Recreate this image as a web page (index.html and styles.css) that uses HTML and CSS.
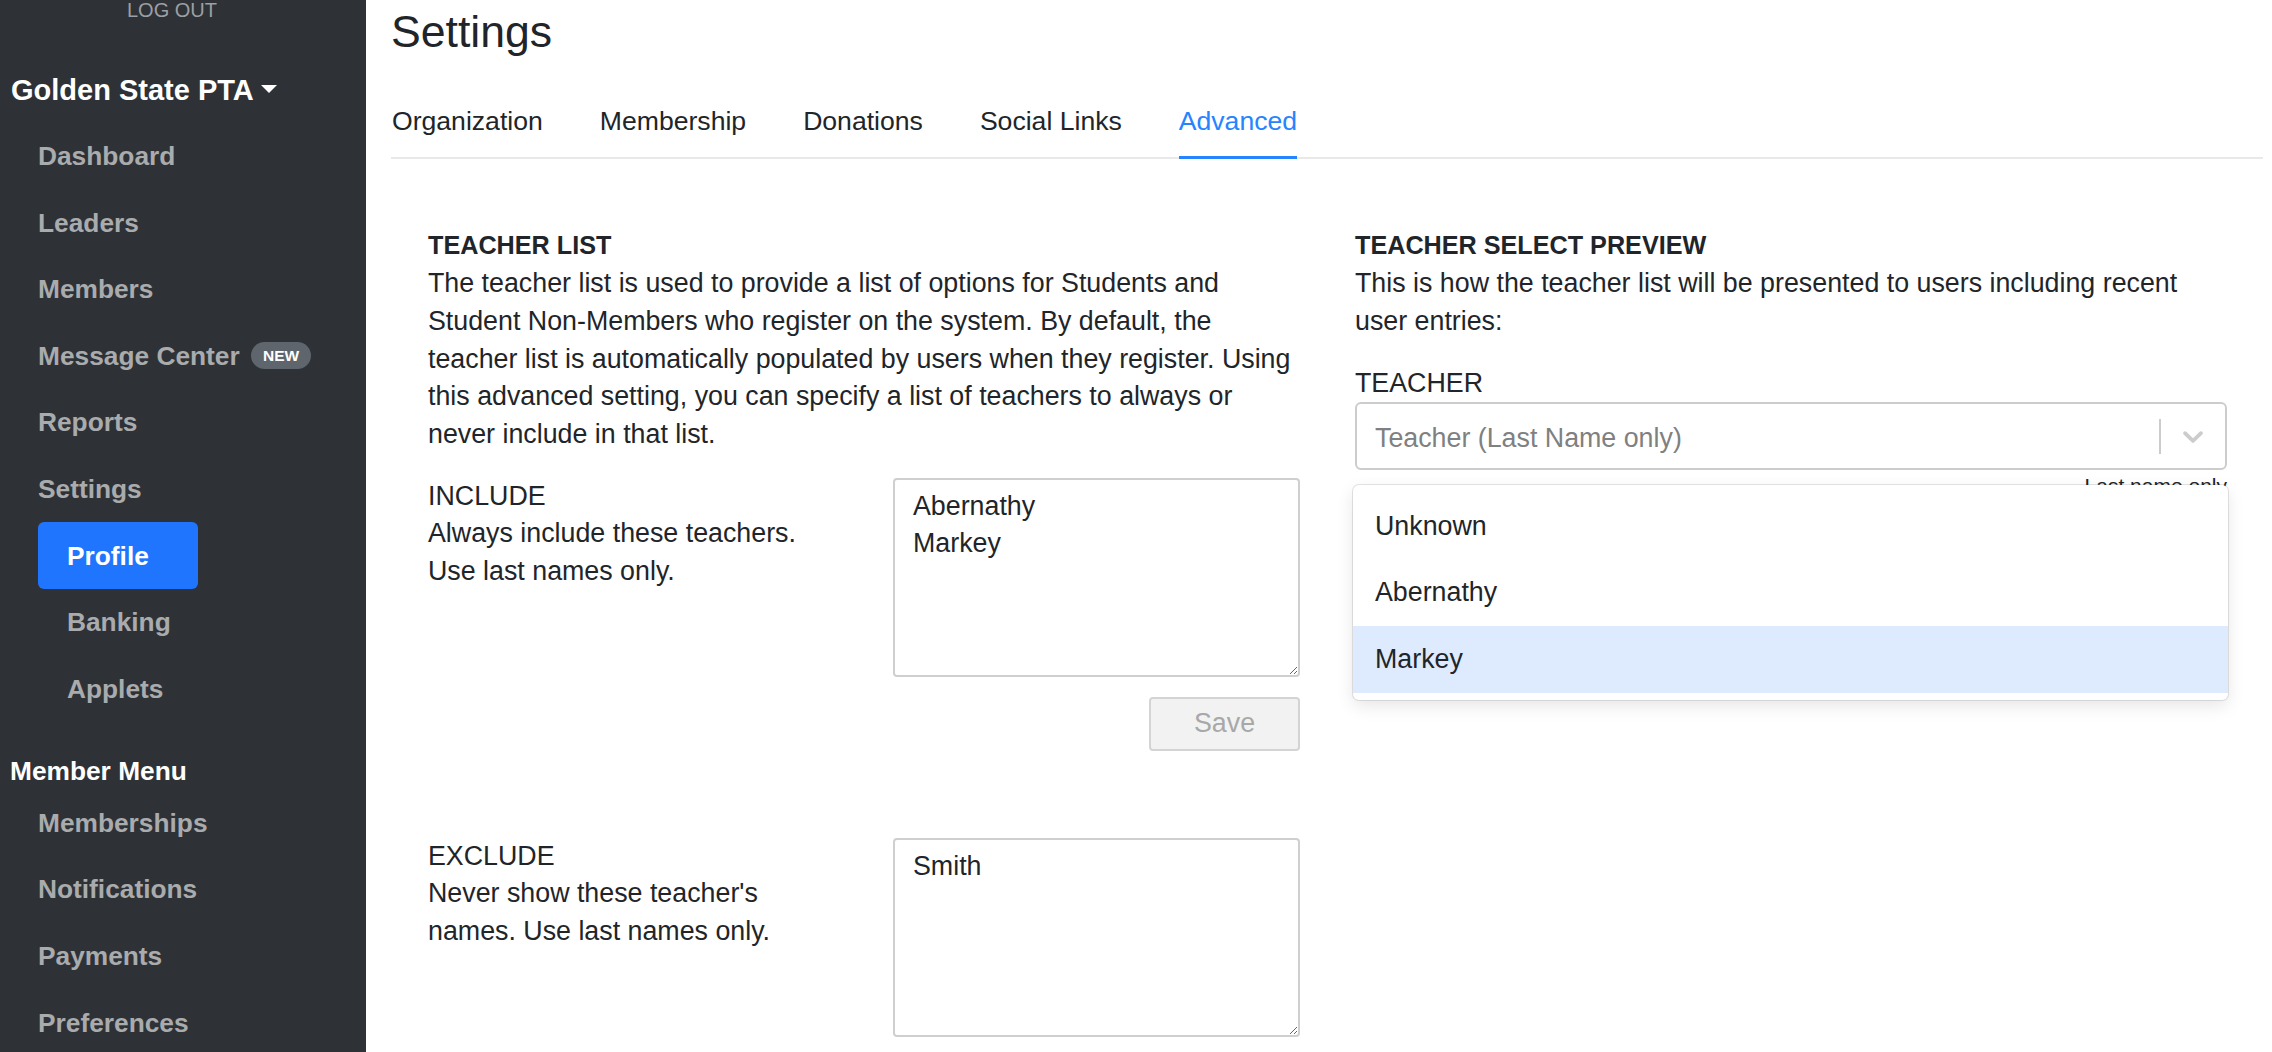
FILE: index.html
```html
<!DOCTYPE html>
<html lang="en">
<head>
<meta charset="utf-8">
<title>Settings</title>
<link rel="stylesheet" href="styles.css">
</head>
<body>
<aside class="sidebar">
  <div class="logout">LOG OUT</div>
  <div class="org">Golden State PTA <span class="caret"></span></div>
  <ul class="nav">
    <li><a class="nav-link">Dashboard</a></li>
    <li><a class="nav-link">Leaders</a></li>
    <li><a class="nav-link">Members</a></li>
    <li><a class="nav-link">Message Center <span class="badge">NEW</span></a></li>
    <li><a class="nav-link">Reports</a></li>
    <li><a class="nav-link">Settings</a>
      <ul class="subnav">
        <li><a class="sub-link active">Profile</a></li>
        <li><a class="sub-link">Banking</a></li>
        <li><a class="sub-link">Applets</a></li>
      </ul>
    </li>
  </ul>
  <div class="section-title">Member Menu</div>
  <ul class="nav nav-member">
    <li><a class="nav-link">Memberships</a></li>
    <li><a class="nav-link">Notifications</a></li>
    <li><a class="nav-link">Payments</a></li>
    <li><a class="nav-link">Preferences</a></li>
  </ul>
</aside>

<main class="main">
  <h1 class="title">Settings</h1>
  <nav class="tabs">
    <a class="tab">Organization</a>
    <a class="tab">Membership</a>
    <a class="tab">Donations</a>
    <a class="tab">Social Links</a>
    <a class="tab active">Advanced</a>
  </nav>

  <div class="content">
    <section class="col">
      <h3 class="heading">TEACHER LIST</h3>
      <p class="desc">The teacher list is used to provide a list of options for Students and<br>Student Non-Members who register on the system. By default, the<br>teacher list is automatically populated by users when they register. Using<br>this advanced setting, you can specify a list of teachers to always or<br>never include in that list.</p>

      <div class="field-row">
        <div class="field-label">INCLUDE<br>Always include these teachers.<br>Use last names only.</div>
        <div class="field-input">
          <textarea class="textarea">Abernathy
Markey</textarea>
          <div class="save-row"><button class="btn-save" disabled>Save</button></div>
        </div>
      </div>

      <div class="field-row field-row-exclude">
        <div class="field-label">EXCLUDE<br>Never show these teacher's<br>names. Use last names only.</div>
        <div class="field-input">
          <textarea class="textarea">Smith</textarea>
        </div>
      </div>
    </section>

    <section class="col">
      <h3 class="heading">TEACHER SELECT PREVIEW</h3>
      <p class="desc">This is how the teacher list will be presented to users including recent<br>user entries:</p>

      <div class="select-group">
        <div class="select-label">TEACHER</div>
        <div class="select-wrap">
          <div class="select">
            <div class="select-value">Teacher (Last Name only)</div>
            <span class="select-sep"></span>
            <div class="select-indicator">
              <svg viewBox="0 0 20 20" width="34" height="34" aria-hidden="true"><path fill="#cccccc" d="M4.516 7.548c0.436-0.446 1.043-0.481 1.576 0l3.908 3.747 3.908-3.747c0.533-0.481 1.141-0.446 1.574 0 0.436 0.445 0.408 1.197 0 1.615-0.406 0.418-4.695 4.502-4.695 4.502-0.217 0.223-0.502 0.335-0.787 0.335s-0.57-0.112-0.789-0.335c0 0-4.287-4.084-4.695-4.502s-0.436-1.170 0-1.615z"/></svg>
            </div>
          </div>
          <div class="menu">
            <div class="option">Unknown</div>
            <div class="option">Abernathy</div>
            <div class="option focused">Markey</div>
          </div>
        </div>
        <div class="helper">Last name only</div>
      </div>
    </section>
  </div>
</main>
</body>
</html>
```

FILE: styles.css
```css
* { box-sizing: border-box; }

html, body { height: 100%; }

body {
  margin: 0;
  display: flex;
  height: 1052px;
  overflow: hidden;
  font-family: "Liberation Sans", Arial, sans-serif;
  color: #212529;
  background: #ffffff;
}

/* Sidebar */
.sidebar {
  width: 366px;
  flex: none;
  background: #2e3237;
  color: #a9abad;
}

.logout {
  margin-left: 127px;
  font-size: 20px;
  line-height: 21px;
  color: #9c9fa3;
}

.org {
  margin-top: 51.5px;
  margin-left: 11px;
  font-size: 29px;
  line-height: 35px;
  font-weight: 700;
  color: #ffffff;
  display: flex;
  align-items: center;
}

.caret {
  display: inline-block;
  width: 0;
  height: 0;
  margin-left: 7px;
  margin-top: -3px;
  border-top: 8px solid #ffffff;
  border-left: 8.5px solid transparent;
  border-right: 8.5px solid transparent;
}

.nav, .subnav {
  list-style: none;
  margin: 0;
  padding: 0;
}

.nav {
  margin-top: 15.3px;
}

.nav-link, .sub-link {
  display: block;
  font-size: 26.3px;
  line-height: 30px;
  padding: 18.3px 0;
  font-weight: 700;
  color: #a9abad;
}

.nav-link {
  margin-left: 38px;
}

.subnav {
  margin-left: 38px;
}

.sub-link {
  padding-left: 29px;
  width: 160px;
  border-radius: 6px;
}

.sub-link.active {
  background: #1f75fe;
  color: #ffffff;
}

.badge {
  display: inline-block;
  margin-left: 4px;
  padding: 0 12px;
  height: 27px;
  line-height: 27px;
  border-radius: 14px;
  background: #5e656c;
  color: #ffffff;
  font-size: 15.5px;
  font-weight: 700;
  vertical-align: 4px;
}

.section-title {
  margin-top: 34px;
  margin-left: 10px;
  font-size: 26.3px;
  line-height: 30px;
  font-weight: 700;
  color: #ffffff;
}

.nav-member {
  margin-top: 3.4px;
}

/* Main */
.main {
  flex: 1;
  min-width: 0;
  padding: 6.4px 9px 0 25px;
}

.title {
  margin: 0;
  font-size: 44.6px;
  line-height: 52.8px;
  font-weight: 400;
  color: #212529;
}

.tabs {
  display: flex;
  margin-top: 43.3px;
  border-bottom: 2px solid #e9e9e9;
}

.tab {
  font-size: 26.6px;
  line-height: 38.5px;
  padding-bottom: 15px;
  margin-right: 57px;
  margin-bottom: -2px;
  border-bottom: 3px solid transparent;
  color: #212529;
}

.tab:first-child {
  margin-left: 1px;
}

.tab.active {
  color: #2684ff;
  border-bottom-color: #2684ff;
}

.content {
  display: grid;
  grid-template-columns: 1fr 1fr;
  column-gap: 55px;
  padding: 68.5px 36px 0 37px;
  font-size: 26.8px;
  line-height: 37.7px;
}

.heading {
  margin: 0;
  font-size: 25.2px;
  line-height: 37.7px;
  font-weight: 700;
}

.desc {
  margin: 0;
  white-space: nowrap;
}

.field-row {
  display: grid;
  grid-template-columns: 1fr 407px;
  column-gap: 60px;
  margin-top: 24px;
}

.field-row-exclude {
  margin-top: 87px;
}

.field-label {
  white-space: nowrap;
}

.textarea {
  display: block;
  width: 407px;
  height: 199px;
  padding: 8px 18px;
  border: 2px solid #cfcfcf;
  border-radius: 4px;
  font-family: inherit;
  font-size: 26.8px;
  line-height: 37.7px;
  color: #212529;
  resize: vertical;
  outline: none;
}

.save-row {
  display: flex;
  justify-content: flex-end;
  margin-top: 20px;
}

.btn-save {
  width: 151px;
  height: 54px;
  font-family: inherit;
  font-size: 26.8px;
  color: #a8a8a8;
  background: #f2f2f2;
  border: 2px solid #d4d4d4;
  border-radius: 4px;
}

.select-group {
  margin-top: 24px;
}

.select-label {
  line-height: 37.7px;
}

.select-wrap {
  position: relative;
  margin-top: 0;
}

.select {
  display: flex;
  align-items: center;
  height: 68px;
  border: 2px solid #cccccc;
  border-radius: 6px;
  background: #ffffff;
}

.select-value {
  flex: 1;
  padding-left: 18px;
  padding-top: 5px;
  color: #808080;
}

.select-sep {
  width: 2px;
  height: 35px;
  background: #cccccc;
}

.select-indicator {
  width: 64px;
  display: flex;
  align-items: center;
  justify-content: center;
}

.select-indicator svg {
  display: block;
}

.helper {
  text-align: right;
  font-size: 21px;
  line-height: 31.5px;
  color: #212529;
}

.menu {
  position: absolute;
  top: calc(100% + 15px);
  left: -2px;
  right: -1px;
  padding: 7px 0;
  background: #ffffff;
  border-radius: 6px;
  box-shadow: 0 0 0 1px rgba(0, 0, 0, 0.1), 0 6px 17px rgba(0, 0, 0, 0.1);
  z-index: 2;
}

.option {
  padding: 14.65px 22px;
  line-height: 37.7px;
  color: #212529;
}

.option:first-child {
  padding-top: 16px;
  padding-bottom: 13.3px;
}

.option.focused {
  background: #deebff;
}
```
